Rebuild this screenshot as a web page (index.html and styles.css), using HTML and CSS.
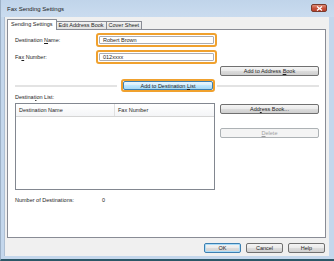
FILE: index.html
```html
<!DOCTYPE html>
<html lang="en">
<head>
    <meta charset="UTF-8">
    <title>Fax Sending Settings</title>
    <link rel="stylesheet" href="styles.css">
</head>
<body>
    <div class="window">
        <div class="titlebar">
            <span class="title">Fax Sending Settings</span>
            <span class="close">
                <svg width="7" height="5" viewBox="0 0 7 5"><path d="M1 0.5 L6 4.5 M6 0.5 L1 4.5" stroke="#fff" stroke-width="1.3"/></svg>
            </span>
        </div>

        <div class="dialog">
            <div class="tabs">
                <div class="tab active">Sending Settings</div>
                <div class="tab">Edit Address Book</div>
                <div class="tab">Cover Sheet</div>
            </div>

            <div class="panel">
                <div class="field">
                    <label>Destination <u>N</u>ame:</label>
                    <div class="hl hl-input"><div class="textbox">Robert Brown</div></div>
                </div>
                <div class="field field-2">
                    <label>Fa<u>x</u> Number:</label>
                    <div class="hl hl-input"><div class="textbox">012xxxx</div></div>
                </div>

                <div class="row-end">
                    <button class="btn btn-side">Add to Address <u>B</u>ook</button>
                </div>

                <div class="add-row">
                    <div class="sep"></div>
                    <div class="hl hl-btn"><button class="btn btn-focus">Add to Destination <u>L</u>ist</button></div>
                    <div class="sep"></div>
                </div>

                <div class="caption">Destinat<u>i</u>on List:</div>

                <div class="list-row">
                    <div class="listbox">
                        <div class="list-head">
                            <div class="col col-name">Destination Name</div>
                            <div class="col">Fax Number</div>
                        </div>
                    </div>
                    <div class="side">
                        <button class="btn btn-side">Add<u>r</u>ess Book...</button>
                        <button class="btn btn-side btn-delete" disabled><u>D</u>elete</button>
                    </div>
                </div>

                <div class="count">
                    <span class="count-label">Number of Destinations:</span>
                    <span>0</span>
                </div>
            </div>

            <div class="actions">
                <button class="btn btn-default">OK</button>
                <button class="btn">Cancel</button>
                <button class="btn">Help</button>
            </div>
        </div>
    </div>
</body>
</html>
```

FILE: styles.css
```css
/* Window frame */
:root {
    --frame: #c4d7ec;
    --face: #f0f0f0;
    --edge: #898c95;
    --orange: #f0a12e;
    --text: #1e1e1e;
}
body {
    margin: 0;
    font-family: 'Liberation Sans', Arial, sans-serif;
    font-size: 5.5px;
    color: var(--text);
}
u { text-decoration-thickness: 0.5px; text-underline-offset: 0.8px; }
.window {
    width: 334px;
    height: 261px;
    box-sizing: border-box;
    display: flex;
    flex-direction: column;
    background: var(--frame);
    padding: 0 5px 3px 3px;
    border-left: 1px solid #9db1c7;
    border-bottom: 2px solid #2c5767;
}
.titlebar {
    height: 17px;
    display: flex;
    align-items: center;
    justify-content: space-between;
    background: linear-gradient(#c0d4ea, #cadcef);
    margin: 0 -5px 0 -3px;
    padding: 0 7px 0 6px;
}
.title {
    font-size: 6px;
    color: #1a1a1a;
    margin-top: 1px;
}
.close {
    width: 16px;
    height: 8px;
    box-sizing: border-box;
    display: flex;
    align-items: center;
    justify-content: center;
    background: linear-gradient(#e0907c, #c7503a 55%, #b8412c);
    border: 1px solid #7a3a2c;
    border-radius: 2px;
    margin-top: -1px;
}

/* Dialog body */
.dialog {
    flex: 1;
    display: flex;
    flex-direction: column;
    background: var(--face);
    border-left: 1px solid #aebfd2;
    padding: 2px 3px 3px 2px;
}
.tabs {
    display: flex;
    align-items: flex-end;
    height: 10px;
    position: relative;
    z-index: 1;
}
.tab {
    height: 8px;
    box-sizing: border-box;
    padding: 0 2px;
    line-height: 7px;
    border: 1px solid var(--edge);
    border-bottom: none;
    margin-left: -1px;
    background: linear-gradient(#f3f3f3, #e1e1e1);
    border-radius: 1px 1px 0 0;
}
.tab.active {
    height: 11px;
    margin-left: 0;
    margin-bottom: -1px;
    padding: 0 3px;
    line-height: 9px;
    background: #fff;
}
.panel {
    flex: 1;
    background: #fff;
    border: 1px solid var(--edge);
    padding: 3px 6px 0 7px;
}

/* Fields */
.field {
    display: flex;
    align-items: center;
}
.field-2 { margin-top: 3px; }
.field label { width: 81px; }
.hl {
    box-sizing: border-box;
    border: 2px solid var(--orange);
    border-radius: 3px;
    padding: 1px;
    display: flex;
}
.hl-input {
    width: 121px;
    height: 14px;
}
.textbox {
    flex: 1;
    border: 1px solid #abadb3;
    border-radius: 1px;
    padding-left: 3px;
    display: flex;
    align-items: center;
}

/* Buttons */
.btn {
    height: 10px;
    width: 37px;
    box-sizing: border-box;
    padding: 0;
    font-family: inherit;
    font-size: 5.5px;
    color: var(--text);
    border: 1px solid #707070;
    border-radius: 2px;
    background: linear-gradient(#f4f4f4, #ebebeb 45%, #dddddd 50%, #cfcfcf);
}
.btn-side { width: 99px; }
.btn-delete {
    margin-top: 14px;
    border-color: #adb2b5;
    background: #f4f4f4;
    color: #a0a0a0;
}
.btn-focus {
    flex: 1;
    height: auto;
    border-color: #3c7fb1;
    background: linear-gradient(#eaf6fd, #d9f0fc 45%, #bee6fd 50%, #a7d9f5);
}
.btn-default {
    border-color: #3c7fb1;
    box-shadow: inset 0 0 0 1px #aadcf8;
}
.row-end {
    display: flex;
    justify-content: flex-end;
    margin-top: 2px;
}
.add-row {
    display: flex;
    align-items: center;
    margin-top: 3px;
}
.sep {
    flex: 1;
    height: 2px;
    background: #e3e3e3;
}
.hl-btn {
    width: 94px;
    height: 13px;
    margin: 0 2px 0 4px;
    padding: 0;
}

/* Destination list */
.caption {
    margin-top: 2px;
    line-height: 7px;
}
.list-row {
    display: flex;
    margin-top: 2px;
}
.listbox {
    width: 200px;
    height: 87px;
    box-sizing: border-box;
    border: 1px solid #828790;
}
.list-head {
    display: flex;
    height: 12px;
    border-bottom: 1px solid #d5d5d5;
    background: linear-gradient(#fff, #f4f5f7);
}
.col {
    padding-left: 3px;
    display: flex;
    align-items: center;
}
.col-name {
    width: 95px;
    border-right: 1px solid #e0e0e0;
}
.side {
    display: flex;
    flex-direction: column;
    margin-left: 5px;
    padding-top: 1px;
}
.count {
    display: flex;
    margin-top: 7px;
    line-height: 7px;
}
.count-label { width: 87px; }

/* Bottom buttons */
.actions {
    display: flex;
    justify-content: flex-end;
    gap: 5px;
    margin-top: 5px;
    padding-right: 1px;
}
```
